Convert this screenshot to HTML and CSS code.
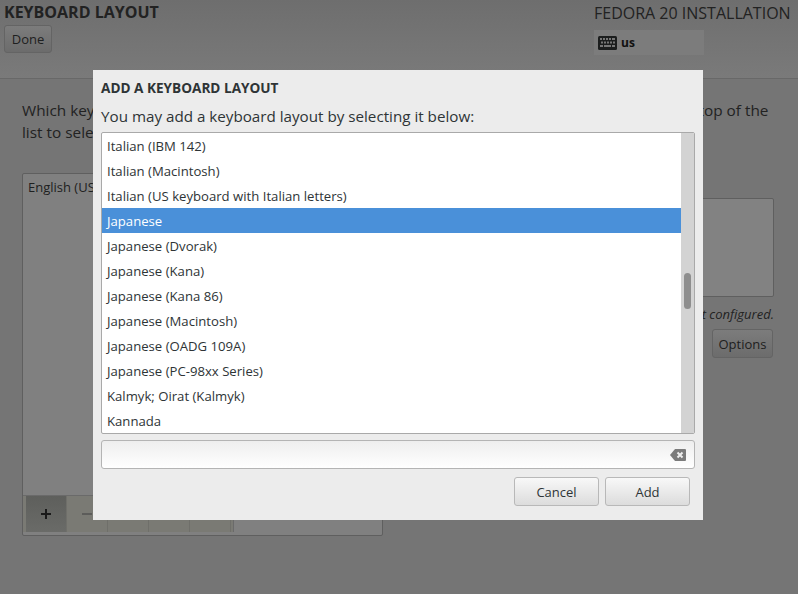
FILE: index.html
```html
<!DOCTYPE html>
<html lang="en">
<head>
<meta charset="utf-8">
<title>Keyboard Layout</title>
<link rel="stylesheet" href="styles.css">
</head>
<body>
<div class="page">
  <header class="hub">
    <div class="hub-left">
      <h1 class="hub-title">KEYBOARD LAYOUT</h1>
      <button class="bg-btn done">Done</button>
    </div>
    <div class="hub-right">
      <div class="hub-product">FEDORA 20 INSTALLATION</div>
      <div class="kbd-indicator">
        <svg class="kbd-icon" width="19" height="14" viewBox="0 0 19 14"><rect width="19" height="14" rx="1.5" fill="#1c1e1e"/><g fill="#777"><rect x="2" y="2" width="2" height="2"/><rect x="5" y="2" width="2" height="2"/><rect x="8" y="2" width="2" height="2"/><rect x="11" y="2" width="2" height="2"/><rect x="14" y="2" width="3" height="2"/><rect x="3" y="5.5" width="2" height="2"/><rect x="6" y="5.5" width="2" height="2"/><rect x="9" y="5.5" width="2" height="2"/><rect x="12" y="5.5" width="2" height="2"/><rect x="15" y="5.5" width="2" height="2"/><rect x="2" y="9" width="3" height="2"/><rect x="6" y="9" width="7" height="2"/><rect x="14" y="9" width="3" height="2"/></g></svg>
        <span class="kbd-name">us</span>
      </div>
    </div>
  </header>
  <main class="content">
    <p class="intro">Which keyboard layouts would you like to use on this system? You may move any layout to the top of the list to select it as the default.</p>
    <div class="columns">
      <section class="layouts">
        <div class="layouts-list">English (US)</div>
        <div class="toolbar">
          <span class="tool active"><svg width="12" height="12" viewBox="0 0 12 12"><path d="M5 1h2v4h4v2H7v4H5V7H1V5h4Z" fill="#1a1a1a"/></svg></span>
          <span class="tool"><svg width="12" height="12" viewBox="0 0 12 12"><path d="M1 5h10v2H1Z" fill="#5c5c5a"/></svg></span>
          <span class="tool"></span>
          <span class="tool"></span>
          <span class="tool"></span>
        </div>
      </section>
      <section class="side">
        <div class="preview"></div>
        <div class="switching">Layout switching not configured.</div>
        <button class="bg-btn options">Options</button>
      </section>
    </div>
  </main>

  <div class="dialog">
    <h2 class="dialog-title">ADD A KEYBOARD LAYOUT</h2>
    <p class="dialog-sub">You may add a keyboard layout by selecting it below:</p>
    <div class="picker">
      <ul class="rows">
        <li>Italian (IBM 142)</li>
        <li>Italian (Macintosh)</li>
        <li>Italian (US keyboard with Italian letters)</li>
        <li class="selected">Japanese</li>
        <li>Japanese (Dvorak)</li>
        <li>Japanese (Kana)</li>
        <li>Japanese (Kana 86)</li>
        <li>Japanese (Macintosh)</li>
        <li>Japanese (OADG 109A)</li>
        <li>Japanese (PC-98xx Series)</li>
        <li>Kalmyk; Oirat (Kalmyk)</li>
        <li>Kannada</li>
      </ul>
      <div class="scrollbar"><div class="thumb"></div></div>
    </div>
    <div class="entry">
      <svg class="clear-icon" width="16" height="12" viewBox="0 0 16 12"><path d="M5 0H15a1 1 0 0 1 1 1V11a1 1 0 0 1-1 1H5L0 6Z" fill="#7b7b7b"/><path d="M7.5 3.5l5 5M12.5 3.5l-5 5" stroke="#eee" stroke-width="2"/></svg>
    </div>
    <div class="actions">
      <button class="dlg-btn">Cancel</button>
      <button class="dlg-btn">Add</button>
    </div>
  </div>
</div>
</body>
</html>
```
FILE: styles.css
```css
* { box-sizing: border-box; }
html, body { margin: 0; padding: 0; }
body { background: #757575; font-family: "Open Sans", "Noto Sans", sans-serif; color: #1e2020; }
.page { position: relative; width: 798px; height: 594px; overflow: hidden; background: #757575; }

.hub {
  height: 79px;
  display: flex;
  justify-content: space-between;
  border-bottom: 1px solid #686868;
  background: linear-gradient(#6e6e6e, #7a7a7a);
  padding: 4px 0 0 4px;
}
.hub-title { margin: 0; font-size: 16px; line-height: 17px; font-weight: 700; color: #222; letter-spacing: 0; }
.bg-btn {
  font: inherit;
  font-size: 13px;
  color: #1e2020;
  background: linear-gradient(#7c7c7c, #6c6c6c);
  border: 1px solid #646464;
  border-radius: 3px;
  padding: 0;
}
.done { display: block; width: 48px; height: 28px; margin-top: 4px; }
.hub-right { width: 204px; }
.hub-product { font-size: 16px; line-height: 18px; white-space: nowrap; color: #222; }
.kbd-indicator {
  width: 110px; height: 25px; margin-top: 8px;
  background: #7c7c7c;
  display: flex; align-items: center; gap: 4px; padding-left: 4px;
}
.kbd-name { font-size: 12px; font-weight: 700; color: #111; }

.content { padding: 20px 24px 0 22px; }
.intro { margin: 0; font-size: 15.35px; line-height: 22px; color: #222; width: 752px; }
.columns { display: flex; justify-content: space-between; margin-top: 30px; }
.layouts { width: 361px; height: 363px; border: 1px solid #5f5f5f; border-radius: 2px; background: #808080; display: flex; flex-direction: column; }
.layouts-list { flex: 1; padding: 4px 5px; font-size: 13px; line-height: 18px; }
.toolbar { height: 37px; display: flex; margin-bottom: 3px; width: 211px; padding-left: 3px; border-top: 1px solid #6a6a6a; border-right: 1px solid #6a6a6a; background: #7a7a74; }
.tool { width: 41px; display: flex; align-items: center; justify-content: center; border-right: 1px solid #6f6f6a; }
.tool.active { background: linear-gradient(#5e5f5c, #6a6b68); }
.side { width: 372px; display: flex; flex-direction: column; align-items: flex-end; padding-top: 25px; }
.preview { width: 372px; height: 99px; border: 1px solid #5f5f5f; border-radius: 2px; background: #828282; }
.switching { margin-top: 8px; font-size: 13px; line-height: 18px; font-style: italic; color: #222; }
.options { width: 61px; height: 29px; margin-top: 6px; margin-right: 1px; }

.dialog {
  position: absolute; left: 93px; top: 70px; width: 610px; height: 450px;
  background: #ececec; padding: 9px 8px 0;
}
.dialog-title { margin: 0; font-size: 13.6px; line-height: 18px; font-weight: 700; color: #2e3436; }
.dialog-sub { margin: 9px 0 0; font-size: 15.2px; line-height: 20px; color: #2e3436; }
.picker {
  display: flex; height: 302px; width: 594px; margin-top: 6px;
  background: #fff; border: 1px solid #a9a9a9; border-radius: 2px; overflow: hidden;
}
.rows { flex: 1; list-style: none; margin: 0; padding: 0; overflow: hidden; }
.rows li { height: 25px; padding-left: 5px; font-size: 13.15px; line-height: 26px; color: #2e3436; }
.rows li.selected { background: #4a90d9; color: #fff; }
.scrollbar { width: 13px; background: #d3d3d3; padding: 140px 3px 0; }
.thumb { height: 36px; background: #8e8e8e; border-radius: 4px; }
.entry {
  width: 594px; height: 29px; margin-top: 6px;
  border: 1px solid #b4b4b4; border-radius: 3px;
  background: linear-gradient(#eeeeee, #ffffff);
  display: flex; align-items: center; justify-content: flex-end; padding-right: 8px;
}
.actions { display: flex; justify-content: flex-end; gap: 6px; margin-top: 8px; padding-right: 5px; }
.dlg-btn {
  font: inherit; font-size: 13px; color: #2e3436;
  width: 85px; height: 29px;
  border: 1px solid #b8b8b8; border-radius: 3px;
  background: linear-gradient(#f8f8f8, #dcdcdc);
  padding: 0;
}
```
